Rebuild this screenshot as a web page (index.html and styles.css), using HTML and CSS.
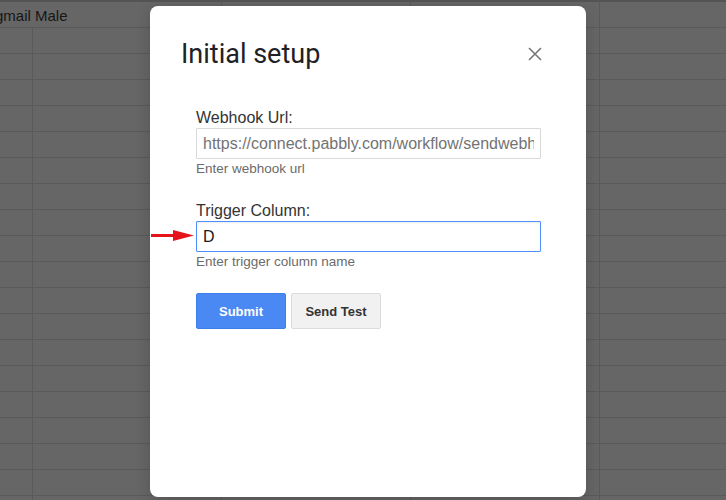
FILE: index.html
```html
<!DOCTYPE html>
<html lang="en">
<head>
<meta charset="utf-8">
<title>Initial setup</title>
<link rel="stylesheet" href="styles.css">
</head>
<body>
<div class="sheet">
  <div class="strip"></div>
  <div class="row"><div class="cell wide"><span class="cell-text">gmail Male</span></div><div class="cell"></div><div class="cell"></div><div class="cell"></div></div>
  <div class="row"><div class="cell"></div><div class="cell"></div><div class="cell"></div><div class="cell"></div><div class="cell"></div></div>
  <div class="row"><div class="cell"></div><div class="cell"></div><div class="cell"></div><div class="cell"></div><div class="cell"></div></div>
  <div class="row"><div class="cell"></div><div class="cell"></div><div class="cell"></div><div class="cell"></div><div class="cell"></div></div>
  <div class="row"><div class="cell"></div><div class="cell"></div><div class="cell"></div><div class="cell"></div><div class="cell"></div></div>
  <div class="row"><div class="cell"></div><div class="cell"></div><div class="cell"></div><div class="cell"></div><div class="cell"></div></div>
  <div class="row"><div class="cell"></div><div class="cell"></div><div class="cell"></div><div class="cell"></div><div class="cell"></div></div>
  <div class="row"><div class="cell"></div><div class="cell"></div><div class="cell"></div><div class="cell"></div><div class="cell"></div></div>
  <div class="row"><div class="cell"></div><div class="cell"></div><div class="cell"></div><div class="cell"></div><div class="cell"></div></div>
  <div class="row"><div class="cell"></div><div class="cell"></div><div class="cell"></div><div class="cell"></div><div class="cell"></div></div>
  <div class="row"><div class="cell"></div><div class="cell"></div><div class="cell"></div><div class="cell"></div><div class="cell"></div></div>
  <div class="row"><div class="cell"></div><div class="cell"></div><div class="cell"></div><div class="cell"></div><div class="cell"></div></div>
  <div class="row"><div class="cell"></div><div class="cell"></div><div class="cell"></div><div class="cell"></div><div class="cell"></div></div>
  <div class="row"><div class="cell"></div><div class="cell"></div><div class="cell"></div><div class="cell"></div><div class="cell"></div></div>
  <div class="row"><div class="cell"></div><div class="cell"></div><div class="cell"></div><div class="cell"></div><div class="cell"></div></div>
  <div class="row"><div class="cell"></div><div class="cell"></div><div class="cell"></div><div class="cell"></div><div class="cell"></div></div>
  <div class="row"><div class="cell"></div><div class="cell"></div><div class="cell"></div><div class="cell"></div><div class="cell"></div></div>
  <div class="row"><div class="cell"></div><div class="cell"></div><div class="cell"></div><div class="cell"></div><div class="cell"></div></div>
  <div class="row"><div class="cell"></div><div class="cell"></div><div class="cell"></div><div class="cell"></div><div class="cell"></div></div>
  <div class="row"><div class="cell"></div><div class="cell"></div><div class="cell"></div><div class="cell"></div><div class="cell"></div></div>
</div>

<div class="dialog">
  <div class="dialog-header">
    <h1 class="dialog-title">Initial setup</h1>
    <svg class="close-icon" width="14" height="14" viewBox="0 0 14 14" aria-label="Close">
      <path d="M1 1 L13 13 M13 1 L1 13" stroke="#777" stroke-width="1.6" fill="none"/>
    </svg>
  </div>
  <form class="form">
    <div class="group">
      <label class="label">Webhook Url:</label>
      <div class="field">
        <input class="input input-url" type="text" value="https://connect.pabbly.com/workflow/sendwebhookdata/IjU3NjEwNTZmMDYzMDA0M2Ii_pc">
      </div>
      <div class="help">Enter webhook url</div>
    </div>
    <div class="group group-second">
      <label class="label">Trigger Column:</label>
      <div class="field">
        <svg class="arrow" width="43" height="11" viewBox="0 0 43 11">
          <rect x="0" y="4" width="24" height="3" fill="#e5141b"/>
          <polygon points="22,0 43,5.5 22,11" fill="#e5141b"/>
        </svg>
        <input class="input input-focus" type="text" value="D">
      </div>
      <div class="help">Enter trigger column name</div>
    </div>
    <div class="actions">
      <button type="button" class="btn btn-primary">Submit</button>
      <button type="button" class="btn btn-secondary">Send Test</button>
    </div>
  </form>
</div>
</body>
</html>
```

FILE: styles.css
```css
html, body {
  margin: 0;
  padding: 0;
}

body {
  width: 726px;
  height: 500px;
  overflow: hidden;
  background: #666666;
  font-family: "Liberation Sans", Arial, sans-serif;
  position: relative;
}

/* Spreadsheet behind the modal */
.sheet {
  margin-left: -156px;
  width: 945px;
}

.strip {
  height: 2px;
  background: #545454;
}

.row {
  display: flex;
  height: 26px;
  box-sizing: border-box;
  border-bottom: 1px solid #5a5a5a;
}

.cell {
  flex: none;
  width: 189px;
  height: 100%;
  box-sizing: border-box;
  border-right: 1px solid #5a5a5a;
}

.cell.wide {
  width: 378px;
}

.cell-text {
  display: block;
  padding-left: 151px;
  padding-top: 1px;
  font-size: 15px;
  line-height: 25px;
  color: #161616;
  white-space: nowrap;
}

/* Modal dialog */
.dialog {
  position: absolute;
  left: 150px;
  top: 6px;
  width: 436px;
  height: 491px;
  box-sizing: border-box;
  background: #ffffff;
  border-radius: 8px;
  box-shadow: 0 4px 16px rgba(0, 0, 0, 0.18);
}

.dialog-header {
  display: flex;
  align-items: center;
  justify-content: space-between;
  padding: 32px 44px 0 31px;
}

.dialog-title {
  margin: 0;
  font-family: Roboto, "Noto Sans", sans-serif;
  font-weight: 400;
  font-size: 27px;
  line-height: 32px;
  color: #202124;
}

.close-icon {
  display: block;
}

.form {
  margin: 38px 0 0 46px;
  width: 345px;
}

.group-second {
  margin-top: 24px;
}

.label {
  display: block;
  font-size: 16px;
  line-height: 19px;
  color: #333333;
}

.field {
  position: relative;
  margin-top: 1px;
}

.input {
  display: block;
  width: 345px;
  height: 31px;
  box-sizing: border-box;
  margin: 0;
  padding: 0 6px;
  border: 1px solid #d9d9d9;
  border-radius: 1px;
  font-family: "Liberation Sans", Arial, sans-serif;
  font-size: 16px;
  color: #737373;
  background: #ffffff;
  outline: none;
}

.input-focus {
  border-color: #4d90fe;
  color: #1a1a1a;
  box-shadow: inset 0 1px 2px rgba(0, 0, 0, 0.08);
}

.arrow {
  position: absolute;
  left: -45px;
  top: 9px;
  display: block;
}

.help {
  margin-top: 2px;
  font-size: 13.5px;
  line-height: 16px;
  color: #6b6b6b;
}

.actions {
  display: flex;
  gap: 5px;
  margin-top: 23px;
}

.btn {
  min-width: 90px;
  height: 36px;
  box-sizing: border-box;
  padding: 0 12px;
  border-radius: 2px;
  font-family: "Liberation Sans", Arial, sans-serif;
  font-size: 13px;
  font-weight: 700;
  cursor: pointer;
}

.btn-primary {
  background: #4a89f3;
  border: 1px solid #3d7fe9;
  color: #ffffff;
}

.btn-secondary {
  background: #f1f1f1;
  border: 1px solid #dcdcdc;
  color: #333333;
}
```
